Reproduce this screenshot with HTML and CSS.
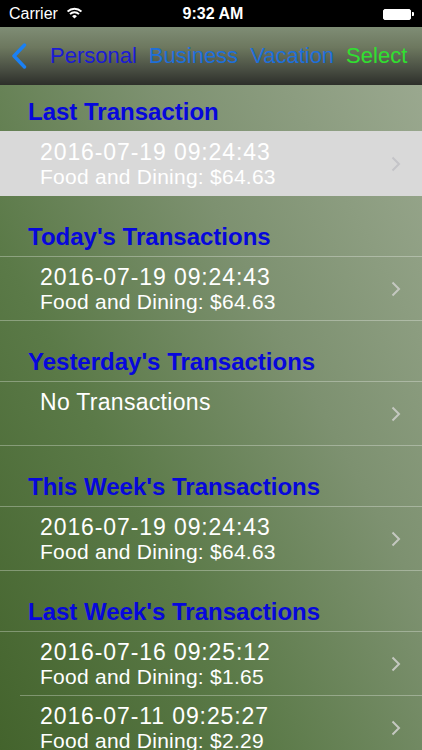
FILE: index.html
```html
<!DOCTYPE html>
<html>
<head>
<meta charset="utf-8">
<link rel="stylesheet" href="styles.css">
</head>
<body>
<div class="screen">
  <div class="status">
    <div class="st-left">
      <span class="carrier">Carrier</span>
      <svg class="wifi" width="15" height="12" viewBox="0 0 15 12">
        <path d="M0.6 4.6 A9.8 9.8 0 0 1 14.4 4.6" fill="none" stroke="#fff" stroke-width="1.9"/>
        <path d="M3 7.1 A6.3 6.3 0 0 1 12 7.1" fill="none" stroke="#fff" stroke-width="1.9"/>
        <path d="M7.5 11.6 L5.1 9.3 A3.3 3.3 0 0 1 9.9 9.3 Z" fill="#fff"/>
      </svg>
    </div>
    <div class="time">9:32 AM</div>
    <div class="battery"><span class="bat-body"></span><span class="bat-nub"></span></div>
  </div>

  <div class="nav">
    <svg class="back" width="16" height="26" viewBox="0 0 16 26">
      <polyline points="13.5,2 3,13 13.5,24" fill="none" stroke="#1a80f5" stroke-width="3.4" stroke-linecap="round" stroke-linejoin="round"/>
    </svg>
    <div class="tabs">
      <span class="tab personal">Personal</span>
      <span class="tab other">Business</span>
      <span class="tab other">Vacation</span>
      <span class="tab select">Select</span>
    </div>
  </div>

  <div class="content">
    <div class="header first">Last Transaction</div>
    <div class="group">
      <div class="row selected">
        <div class="txt">
          <div class="l1">2016-07-19 09:24:43</div>
          <div class="l2">Food and Dining: $64.63</div>
        </div>
        <svg class="chev" width="10" height="16" viewBox="0 0 10 16"><polyline points="1.5,1.5 8,8 1.5,14.5" fill="none" stroke="#c4c4c8" stroke-width="2"/></svg>
      </div>
    </div>

    <div class="header">Today's Transactions</div>
    <div class="group">
      <div class="row">
        <div class="txt">
          <div class="l1">2016-07-19 09:24:43</div>
          <div class="l2">Food and Dining: $64.63</div>
        </div>
        <svg class="chev" width="10" height="16" viewBox="0 0 10 16"><polyline points="1.5,1.5 8,8 1.5,14.5" fill="none" stroke="#c4c8c0" stroke-width="2"/></svg>
      </div>
    </div>

    <div class="header">Yesterday's Transactions</div>
    <div class="group">
      <div class="row">
        <div class="txt">
          <div class="l1 plain">No Transactions</div>
        </div>
        <svg class="chev" width="10" height="16" viewBox="0 0 10 16"><polyline points="1.5,1.5 8,8 1.5,14.5" fill="none" stroke="#c4c8c0" stroke-width="2"/></svg>
      </div>
    </div>

    <div class="header">This Week's Transactions</div>
    <div class="group">
      <div class="row">
        <div class="txt">
          <div class="l1">2016-07-19 09:24:43</div>
          <div class="l2">Food and Dining: $64.63</div>
        </div>
        <svg class="chev" width="10" height="16" viewBox="0 0 10 16"><polyline points="1.5,1.5 8,8 1.5,14.5" fill="none" stroke="#c4c8c0" stroke-width="2"/></svg>
      </div>
    </div>

    <div class="header">Last Week's Transactions</div>
    <div class="group">
      <div class="row">
        <div class="txt">
          <div class="l1">2016-07-16 09:25:12</div>
          <div class="l2">Food and Dining: $1.65</div>
        </div>
        <svg class="chev" width="10" height="16" viewBox="0 0 10 16"><polyline points="1.5,1.5 8,8 1.5,14.5" fill="none" stroke="#c4c8c0" stroke-width="2"/></svg>
      </div>
      <div class="row inset">
        <div class="txt">
          <div class="l1">2016-07-11 09:25:27</div>
          <div class="l2">Food and Dining: $2.29</div>
        </div>
        <svg class="chev" width="10" height="16" viewBox="0 0 10 16"><polyline points="1.5,1.5 8,8 1.5,14.5" fill="none" stroke="#c4c8c0" stroke-width="2"/></svg>
      </div>
    </div>
  </div>
</div>
</body>
</html>
```

FILE: styles.css
```css
html, body {
  margin: 0;
  padding: 0;
}
body {
  width: 422px;
  height: 750px;
  overflow: hidden;
  font-family: "Liberation Sans", Arial, sans-serif;
  background: #000;
}
.screen {
  width: 422px;
  height: 750px;
  display: flex;
  flex-direction: column;
  overflow: hidden;
}
.status {
  height: 27px;
  flex: none;
  background: #000;
  color: #fff;
  display: flex;
  align-items: center;
  justify-content: space-between;
  position: relative;
  padding: 0 8px 0 9px;
}
.st-left {
  display: flex;
  align-items: center;
  gap: 9px;
}
.carrier {
  font-size: 16px;
  line-height: 20px;
}
.wifi {
  display: block;
  margin-top: -1px;
}
.time {
  position: absolute;
  left: 0;
  right: 0;
  text-align: center;
  font-size: 16px;
  font-weight: bold;
  line-height: 20px;
  padding-left: 4px;
}
.battery {
  display: flex;
  align-items: center;
  margin-top: 1px;
}
.bat-body {
  width: 26px;
  height: 9px;
  border: 1px solid #fff;
  border-radius: 2px;
  background: #fff;
}
.bat-nub {
  width: 2px;
  height: 4px;
  background: #fff;
  border-radius: 0 1px 1px 0;
  margin-left: 1px;
}
.nav {
  height: 58px;
  flex: none;
  background: linear-gradient(to bottom, #7f8d75 0%, #6d785f 35%, #474c41 75%, #2d2f2a 100%);
  display: flex;
  align-items: center;
  padding-left: 11px;
}
.back {
  display: block;
  margin-right: 23px;
}
.tabs {
  display: flex;
  gap: 12px;
  font-size: 22px;
  line-height: 26px;
}
.personal { color: #1b1bd4; }
.other { color: #1e6fd9; }
.select { color: #30e030; }

.content {
  flex: 1;
  background: linear-gradient(62deg, #43632c 0%, #5b7a48 35%, #7d9170 65%, #9aa88f 100%);
  display: flex;
  flex-direction: column;
}
.header {
  color: #0707dc;
  font-size: 24px;
  font-weight: bold;
  line-height: 28px;
  height: 60px;
  box-sizing: border-box;
  padding: 27px 0 5px 28px;
}
.header.first {
  height: 46px;
  padding-top: 13px;
}
.group {
  border-top: 1px solid rgba(255, 255, 255, 0.3);
  border-bottom: 1px solid rgba(255, 255, 255, 0.3);
}
.row {
  height: 63px;
  display: flex;
  align-items: center;
  justify-content: space-between;
  padding: 0 21px 0 40px;
  position: relative;
}
.row.selected {
  background: #d9d9d9;
  margin: -1px 0;
  height: 65px;
}
.row.inset {
  border-top: 1px solid rgba(255, 255, 255, 0.3);
  margin-left: 20px;
  padding-left: 20px;
}
.txt {
  align-self: flex-start;
  padding-top: 7px;
  color: #fff;
}
.selected .txt {
  padding-top: 8px;
}
.l1 {
  font-size: 23px;
  line-height: 26px;
  letter-spacing: 0.9px;
}
.l1.plain {
  letter-spacing: 0.3px;
}
.l2 {
  font-size: 21px;
  line-height: 24px;
  letter-spacing: 0.25px;
}
.chev {
  display: block;
  flex: none;
}
```
